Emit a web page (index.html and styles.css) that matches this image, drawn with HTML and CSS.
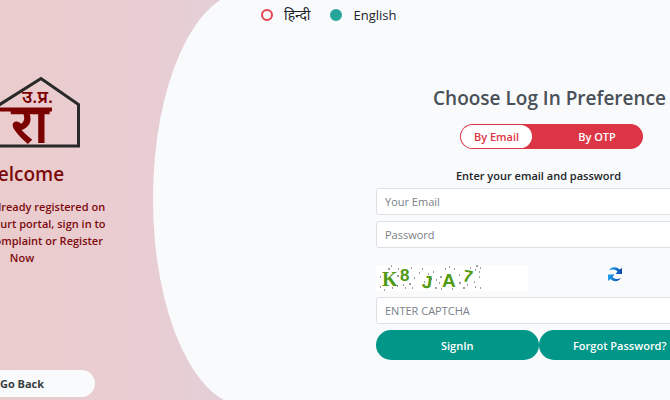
FILE: index.html
```html
<!DOCTYPE html>
<html lang="en">
<head>
<meta charset="utf-8">
<title>Log In</title>
<link rel="stylesheet" href="styles.css">
</head>
<body>
<div class="page">
  <aside class="welcome">
    <svg class="logo" viewBox="0 0 118 74" role="img" aria-label="उ.प्र. रा">
      <path class="house" d="M0 29H36L78 2.500 115.500 28.500V70H0"/>
      <text class="logo-small" x="59" y="27">उ.प्र.</text>
      <text class="logo-big" x="86" y="67" text-anchor="end">रा</text>
      <path class="headline" d="M30 33.500H89"/>
    </svg>
    <h2>Welcome</h2>
    <p>If you are already registered on<br>the UP e-Court portal, sign in to<br>file your Complaint or Register<br>Now</p>
    <button class="back" type="button">Go Back</button>
  </aside>
  <main class="panel">
    <fieldset class="languages">
      <label><input type="radio" name="lang"><span class="hindi" lang="hi">हिन्दी</span></label>
      <label><input type="radio" name="lang" checked><span>English</span></label>
    </fieldset>
    <form class="login">
      <h1>Choose Log In Preference</h1>
      <div class="switch">
        <button class="active" type="button">By Email</button>
        <button class="other" type="button">By OTP</button>
      </div>
      <p class="hint">Enter your email and password</p>
      <input class="field" type="email" placeholder="Your Email" aria-label="Your Email">
      <input class="field" type="password" placeholder="Password" aria-label="Password">
      <div class="captcha">
        <svg class="code" viewBox="0 0 152 26" role="img" aria-label="K8JA7">
          <rect width="152" height="26" fill="#fff"/>
          <g class="code-text">
            <text class="serif" x="6" y="21">K</text>
            <text x="24" y="16" font-size="17">8</text>
            <text x="46" y="23" font-size="18" transform="rotate(7 50 18)">J</text>
            <text x="66" y="22" font-size="19">A</text>
            <text x="87" y="17" font-size="17" transform="rotate(12 91 12)">7</text>
          </g>
          <path class="dots" d="M4 12h1M12 4h2M15 1h1M21 11h2M25 10h1M22 4h1M35 3h1M33 19h2M29 23h1M16 23h1M8 25h1M4 22h1M36 23h1M43 8h1M46 4h1M48 17h1M52 9h1M57 7h1M55 14h1M60 15h1M59 23h2M63 18h1M64 12h2M69 4h1M73 2h1M78 4h1M76 24h1M83 10h1M83 18h2M87 23h2M91 20h1M94 3h1M99 5h1M100 1h2M104 3h1M103 12h1M98 17h1M99 22h1M104 23h1M103 7h1M27 20h1M38 13h1M65 24h1M21 21h1"/>
        </svg>
        <button class="refresh" type="button" aria-label="Refresh captcha">
          <svg viewBox="0 0 16 16">
            <defs><linearGradient id="blue" x2="1"><stop offset="0" stop-color="#1ba3f2"/><stop offset="1" stop-color="#0a46ab"/></linearGradient></defs>
            <path fill="url(#blue)" d="M2 4.500C4 .5 9 0 12.500 3.500L15 2V8H8.500L10.500 5.500C8 3 5 3 2 4.500Z"/>
            <path fill="url(#blue)" d="M14 12C12 15.500 7 16.500 3.500 13L1 15V8.500H7.500L5.500 11C8 13.500 11 13.500 14 12Z"/>
          </svg>
        </button>
      </div>
      <input class="field" type="text" placeholder="ENTER CAPTCHA" aria-label="Enter captcha">
      <div class="actions">
        <button type="submit">SignIn</button>
        <button type="button">Forgot Password?</button>
      </div>
    </form>
  </main>
</div>
</body>
</html>
```
FILE: styles.css
```css
* { box-sizing: border-box; }
html { overflow: hidden; }
body {
  margin: 0;
  overflow: hidden;
  font-family: "Open Sans", "Noto Sans", sans-serif;
  font-size: 11px;
  color: #212529;
  background: linear-gradient(to right, #ebcccd, #e9cdd2 20%, #e4cfd7 33%);
}
button, input { font: inherit; }
button { cursor: pointer; border: 0; padding: 0; }

/* The page bleeds past the window on every side. */
.page {
  display: flex;
  width: calc(100% + 212px);
  min-height: calc(100vh + 14px);
  margin: -8px 0 0 -109px;
}
.welcome {
  flex: 0 0 262px;
  display: flex;
  flex-direction: column;
  align-items: center;
  padding: 84px 0 9px;
  color: #7b0a0d;
  text-align: center;
}
.logo { width: 118px; height: 74px; overflow: visible; }
.house { fill: none; stroke: #292929; stroke-width: 3; }
.headline { stroke: #7b0000; stroke-width: 4; }
.logo-small, .logo-big { fill: #7b0000; }
.logo-small { font-size: 18px; font-weight: 600; }
.logo-big { font-size: 54px; font-weight: 600; }
.welcome h2 { margin: 12px 0; font-size: 19px; line-height: 24px; font-weight: 600; }
.welcome p { margin: 0; line-height: 17px; font-weight: 600; white-space: nowrap; }
.back {
  width: 146px;
  height: 27px;
  margin-top: auto;
  border-radius: 14px;
  background: #f8fafc;
  color: #383d41;
  font-weight: 700;
}

.panel {
  flex: 1;
  min-width: 0;
  border-radius: 15% 0 0 15% / 50%;
  background: #f8fafc;
}
.languages {
  display: flex;
  gap: 20px;
  margin: 0;
  padding: 13px 0 0 108px;
  border: 0;
  font-size: 13px;
  line-height: 20px;
}
.languages label { display: flex; align-items: center; gap: 11px; }
.hindi { font-size: 14px; }
.languages input {
  appearance: none;
  width: 12px;
  height: 12px;
  margin: 0;
  border: 2px solid #e84350;
  border-radius: 50%;
}
.languages input:checked { border-color: #26a69a; background: #26a69a; }

.login { width: 325px; margin: 61px 0 0 223px; }
.login h1 {
  margin: 0 0 14px 22px;
  color: #495057;
  font-size: 19px;
  line-height: 24px;
  font-weight: 600;
  text-align: center;
  white-space: nowrap;
}
.switch {
  display: flex;
  width: 183px;
  height: 25px;
  margin-left: 84px;
  padding: 1px;
  border-radius: 13px;
  background: #dc3545;
}
.switch button {
  flex: 1;
  border-radius: 12px;
  background: transparent;
  color: #fff;
  font-weight: 600;
}
.switch .active { flex: 0 0 71px; background: #fff; color: #dc3545; }
.switch .other { padding-left: 20px; }
.hint { margin: 18px 0 4px; line-height: 17px; font-weight: 600; text-align: center; }
.field {
  display: block;
  width: 100%;
  height: 27px;
  margin: 0 0 6px;
  padding: 0 8px;
  border: 1px solid #dcdfe6;
  border-radius: 3px;
  background: #fff;
  color: #495057;
}
.field::placeholder { color: #7a8087; opacity: 1; }
.captcha { display: flex; align-items: center; margin: 17px 0 6px; }
.code { width: 152px; height: 26px; }
.code-text { fill: #4f9a12; font-family: "Liberation Sans", sans-serif; font-weight: 700; }
.code-text .serif { font-family: "Liberation Serif", serif; font-size: 20px; }
.dots { stroke: #404040; stroke-width: 1; }
.refresh { width: 16px; height: 16px; margin: 0 0 8px 79px; background: none; }
.refresh svg { display: block; width: 16px; height: 16px; }
.actions { display: flex; }
.actions button {
  flex: 1;
  height: 30px;
  border-radius: 15px;
  background: #009688;
  color: #fff;
  font-weight: 600;
}
```
